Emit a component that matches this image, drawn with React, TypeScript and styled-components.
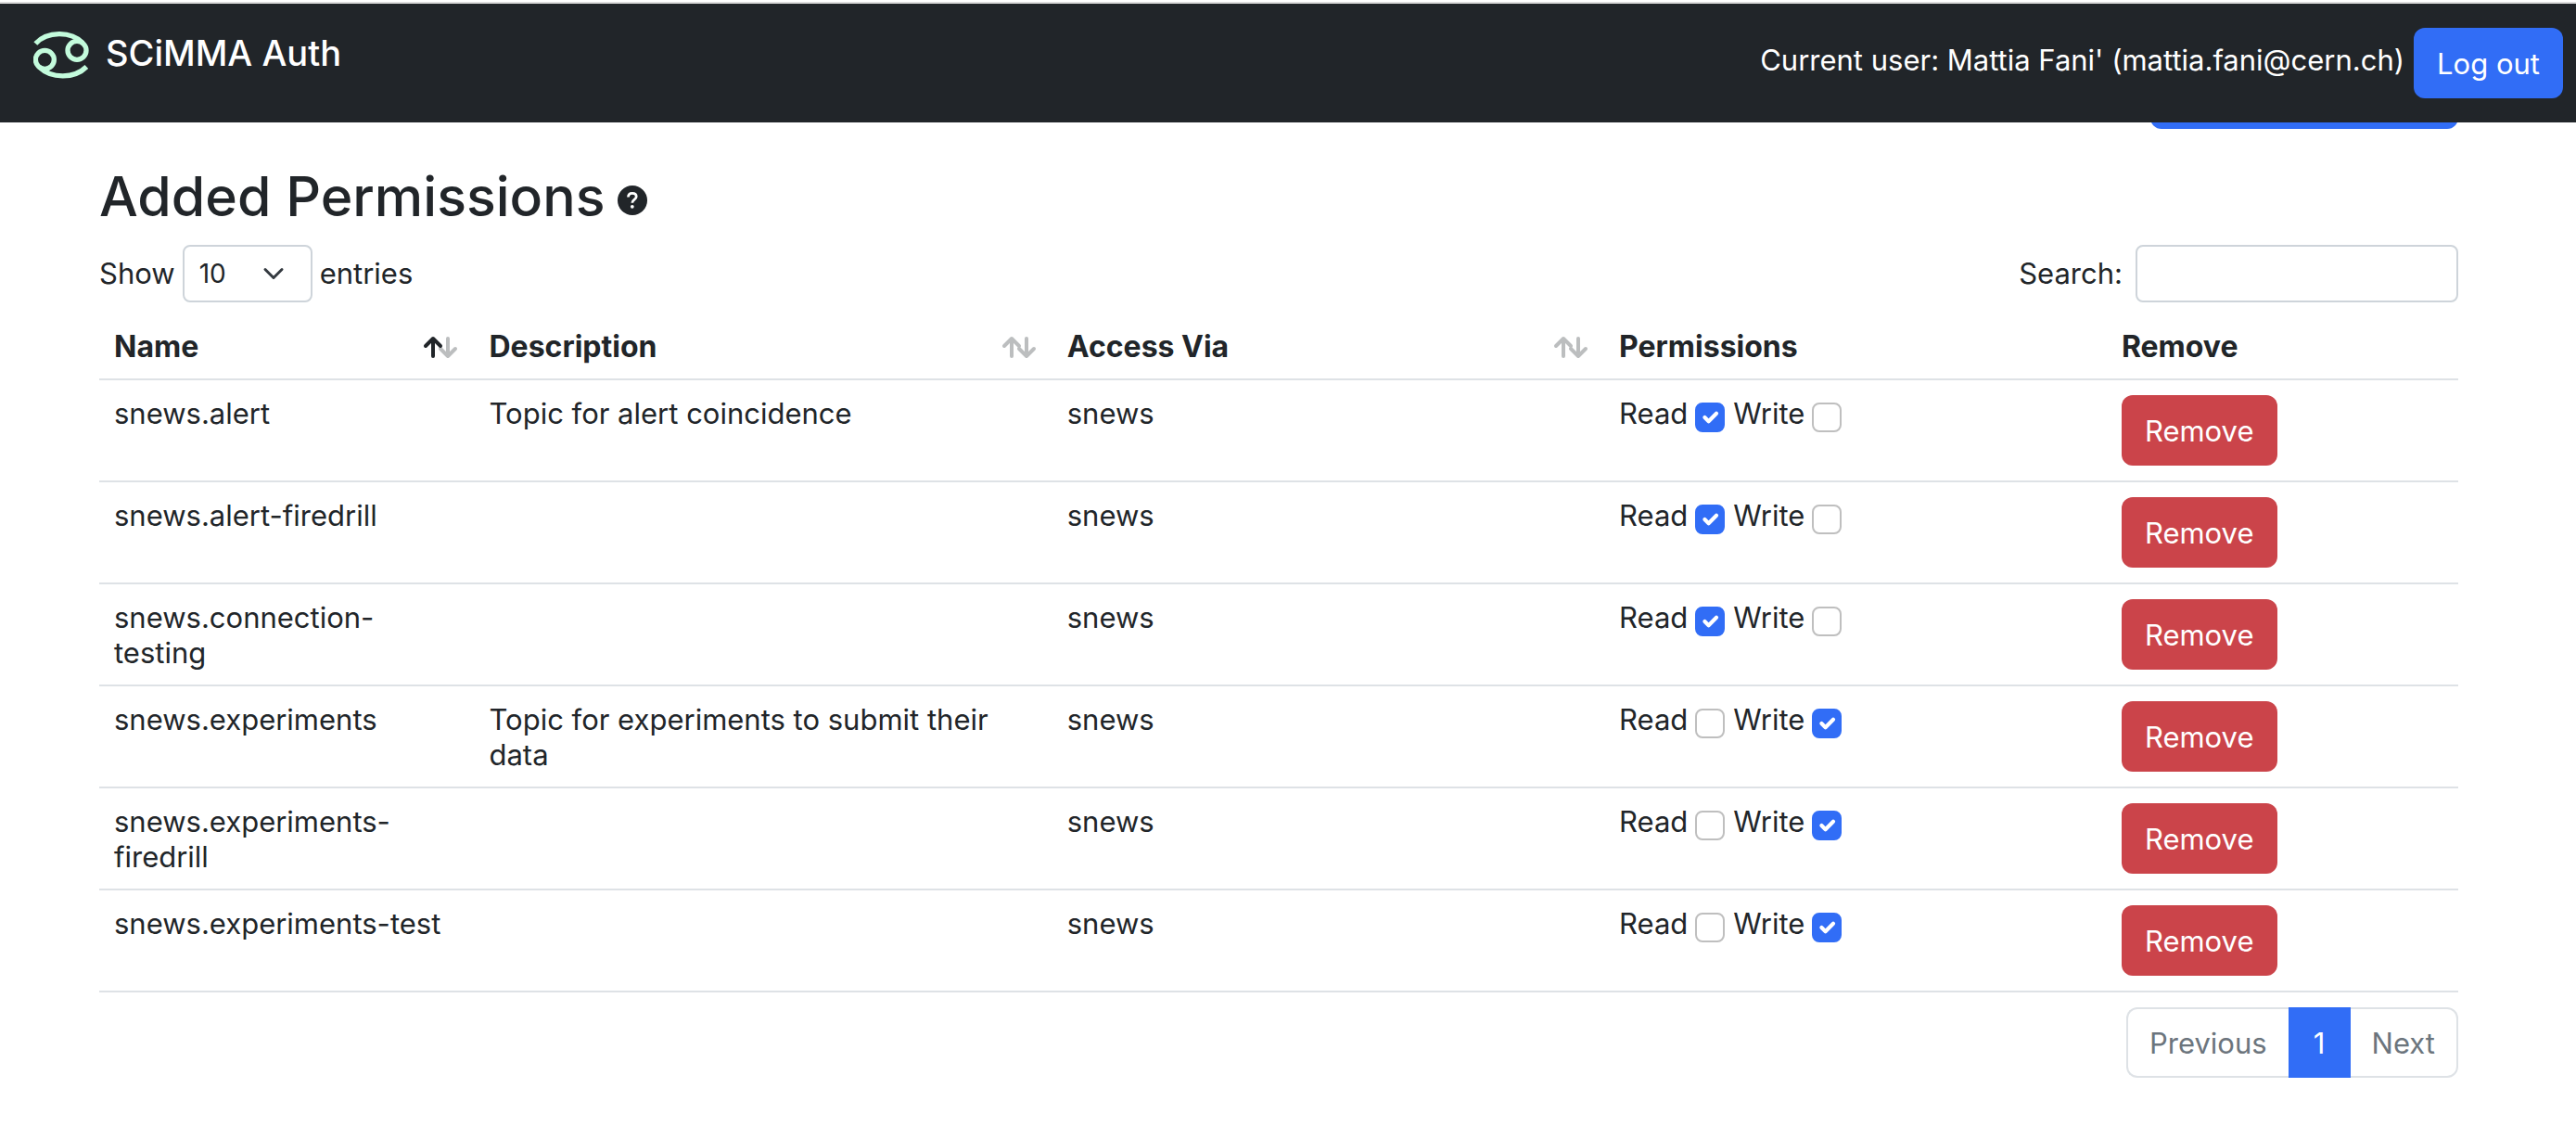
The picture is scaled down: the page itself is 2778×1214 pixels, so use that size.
import React, { useState } from "react";
import styled, { createGlobalStyle } from "styled-components";

const GlobalStyle = createGlobalStyle`
  *, *::before, *::after { box-sizing: border-box; }
  body {
    margin: 0;
    background: #fff;
    color: #212529;
    font-family: Inter, "Liberation Sans", sans-serif;
    font-size: 31px;
    line-height: 38px;
  }
`;

const Navbar = styled.header`
  position: relative;
  z-index: 1;
  display: flex;
  align-items: flex-start;
  justify-content: space-between;
  margin-top: 2px;
  height: 130px;
  padding: 26px 14px 0 36px;
  border-top: 2px solid #dcdcdc;
  background: #212529;
  color: #fff;
`;

const Brand = styled.a`
  display: flex;
  align-items: flex-start;
  gap: 18px;
  color: #fff;
  font-size: 38px;
  font-weight: 500;
  line-height: 54px;
  text-decoration: none;
`;

const Logo = styled.svg`
  width: 60px;
  height: 52px;
  margin-top: 4px;
`;

const Account = styled.div`
  display: flex;
  align-items: flex-start;
  gap: 10px;
`;

const UserName = styled.span`
  padding: 16px 0;
`;

const Button = styled.button<{ $color: string }>`
  display: block;
  height: 76px;
  padding: 2px 25px 0;
  border: 0;
  border-radius: 12px;
  background: ${(p) => p.$color};
  color: #fff;
  font: inherit;
`;

const ActionButton = styled(Button)`
  min-width: 332px;
`;

const ActionRow = styled.div`
  display: flex;
  justify-content: flex-end;
  margin-top: -69px;
`;

const Main = styled.main`
  padding: 0 127px 0 107px;
`;

const Heading = styled.h1`
  display: flex;
  align-items: center;
  gap: 14px;
  margin: 34px 0 14px;
  font-size: 59px;
  font-weight: 500;
  line-height: 77px;
`;

const HelpIcon = styled.svg`
  width: 32px;
  height: 32px;
  margin-top: 8px;
`;

const Controls = styled.div`
  display: flex;
  justify-content: space-between;
  margin-bottom: 12px;
`;

const Field = styled.label<{ $gap: number }>`
  display: flex;
  align-items: center;
  gap: ${(p) => p.$gap}px;
`;

const chevron =
  "url(\"data:image/svg+xml,%3Csvg xmlns='http://www.w3.org/2000/svg' viewBox='0 0 16 16'%3E%3Cpath fill='none' stroke='%23343a40' stroke-linecap='round' stroke-linejoin='round' stroke-width='2' d='m2 5 6 6 6-6'/%3E%3C/svg%3E\")";
const tick =
  "url(\"data:image/svg+xml,%3Csvg xmlns='http://www.w3.org/2000/svg' viewBox='0 0 20 20'%3E%3Cpath fill='none' stroke='%23fff' stroke-linecap='round' stroke-linejoin='round' stroke-width='3' d='m6 10 3 3 6-6'/%3E%3C/svg%3E\")";

const Select = styled.select`
  appearance: none;
  width: 140px;
  height: 62px;
  padding: 0 16px;
  border: 2px solid #ced4da;
  border-radius: 8px;
  background: #fff ${chevron} no-repeat right 28px center / 24px 24px;
  color: inherit;
  font: inherit;
  font-size: 28px;
`;

const SearchInput = styled.input`
  width: 348px;
  height: 62px;
  padding: 0 16px;
  border: 2px solid #ced4da;
  border-radius: 8px;
  font: inherit;
  font-size: 28px;
`;

const Table = styled.table`
  width: 100%;
  table-layout: fixed;
  border-collapse: separate;
  border-spacing: 0;
`;

const HeadCell = styled.th<{ $width: string }>`
  width: ${(p) => p.$width};
  padding: 17px 16px 15px;
  border-bottom: 2px solid #dee2e6;
  font-size: 32px;
  font-weight: 700;
  text-align: left;
`;

const HeadContent = styled.div`
  display: flex;
  align-items: center;
  justify-content: space-between;
`;

const SortIcon = styled.svg`
  width: 40px;
  height: 26px;
`;

const Cell = styled.td<{ $top?: number }>`
  height: 110px;
  padding: ${(p) => p.$top ?? 17}px 16px 0;
  border-bottom: 2px solid #dee2e6;
  vertical-align: top;
`;

const Toggles = styled.div`
  display: flex;
  gap: 9px;
`;

const Toggle = styled.label`
  display: flex;
  align-items: flex-start;
  gap: 8px;
`;

const Checkbox = styled.input`
  appearance: none;
  width: 32px;
  height: 32px;
  margin: 7px 0 0;
  border: 2px solid #bfbfbf;
  border-radius: 8px;
  background: #fff;
  &:checked {
    border-color: #316df6;
    background: #316df6 ${tick} no-repeat center / 28px 28px;
  }
`;

const Pagination = styled.nav`
  display: flex;
  justify-content: flex-end;
  margin-top: 16px;
`;

const PageButton = styled.button<{ $edge?: "start" | "end" }>`
  min-width: 67px;
  height: 76px;
  padding: 2px 23px 0;
  border: 2px solid #dee2e6;
  border-left-width: ${(p) => (p.$edge === "end" ? 0 : 2)}px;
  border-right-width: ${(p) => (p.$edge === "start" ? 0 : 2)}px;
  border-radius: ${(p) => (p.$edge === "start" ? "12px 0 0 12px" : p.$edge === "end" ? "0 12px 12px 0" : "0")};
  background: #fff;
  color: #6c757d;
  font: inherit;
  &[aria-current="page"] {
    border-color: #316df6;
    background: #316df6;
    color: #fff;
  }
`;

const columns = [
  { label: "Name", width: "15.9%", sort: "active" },
  { label: "Description", width: "24.5%", sort: "idle" },
  { label: "Access Via", width: "23.4%", sort: "idle" },
  { label: "Permissions", width: "21.3%" },
  { label: "Remove", width: "14.9%" },
];

const initialRows = [
  { name: "snews.alert", description: "Topic for alert coincidence", read: true, write: false },
  { name: "snews.alert-firedrill", description: "", read: true, write: false },
  { name: "snews.connection-testing", description: "", read: true, write: false },
  { name: "snews.experiments", description: "Topic for experiments to submit their data", read: false, write: true },
  { name: "snews.experiments-firedrill", description: "", read: false, write: true },
  { name: "snews.experiments-test", description: "", read: false, write: true },
];

function SortArrows({ active }: { active: boolean }) {
  return (
    <SortIcon viewBox="0 0 40 26" fill="none" strokeWidth="4" strokeLinecap="round" strokeLinejoin="round" aria-hidden="true">
      <path d="M28 4v19M20 15l8 8 8-8" stroke="#bcbebf" />
      <path d="M12 23V4M4 12l8-8 8 8" stroke={active ? "#212529" : "#bcbebf"} />
    </SortIcon>
  );
}

function Help() {
  return (
    <HelpIcon viewBox="0 0 32 32" aria-hidden="true">
      <circle cx="16" cy="16" r="16" fill="#212529" />
      <path d="M11.500 12.500c0-2.800 1.800-4.200 4.300-4.200s4.400 1.300 4.400 3.700c0 3.200-4.400 3.100-4.400 6.800" fill="none" stroke="#fff" strokeWidth="2.800" />
      <circle cx="15.800" cy="22.800" r="1.900" fill="#fff" />
    </HelpIcon>
  );
}

export default function App() {
  const [rows, setRows] = useState(initialRows);
  const toggle = (name: string, key: "read" | "write") =>
    setRows(rows.map((r) => (r.name === name ? { ...r, [key]: !r[key] } : r)));

  return (
    <>
      <GlobalStyle />
      <Navbar>
        <Brand href="#">
          <Logo viewBox="18 18 180 156" fill="none" stroke="#c3fbdc" strokeWidth="16" aria-hidden="true">
            <circle cx="55" cy="109" r="30" />
            <circle cx="159" cy="79" r="30" />
            <path d="M25 57C63 16 139 16 178 55" />
            <path d="M190 132C151 171 76 171 37 133" />
          </Logo>
          SCiMMA Auth
        </Brand>
        <Account>
          <UserName>Current user: Mattia Fani' (mattia.fani@cern.ch)</UserName>
          <Button type="button" $color="#316df6">Log out</Button>
        </Account>
      </Navbar>
      <Main>
        <ActionRow>
          <ActionButton type="button" $color="#316df6" aria-label="Create credential" />
        </ActionRow>
        <Heading>
          Added Permissions
          <Help />
        </Heading>
        <Controls>
          <Field $gap={8}>
            Show
            <Select defaultValue="10">
              <option>10</option>
              <option>25</option>
              <option>50</option>
              <option>100</option>
            </Select>
            entries
          </Field>
          <Field $gap={14}>
            Search:
            <SearchInput type="search" />
          </Field>
        </Controls>
        <Table>
          <thead>
            <tr>
              {columns.map((c) => (
                <HeadCell key={c.label} $width={c.width} scope="col">
                  <HeadContent>
                    {c.label}
                    {c.sort && <SortArrows active={c.sort === "active"} />}
                  </HeadContent>
                </HeadCell>
              ))}
            </tr>
          </thead>
          <tbody>
            {rows.map((r) => (
              <tr key={r.name}>
                <Cell>{r.name}</Cell>
                <Cell>{r.description}</Cell>
                <Cell>snews</Cell>
                <Cell>
                  <Toggles>
                    <Toggle>
                      Read
                      <Checkbox type="checkbox" checked={r.read} onChange={() => toggle(r.name, "read")} />
                    </Toggle>
                    <Toggle>
                      Write
                      <Checkbox type="checkbox" checked={r.write} onChange={() => toggle(r.name, "write")} />
                    </Toggle>
                  </Toggles>
                </Cell>
                <Cell $top={16}>
                  <Button type="button" $color="#cb444a">Remove</Button>
                </Cell>
              </tr>
            ))}
          </tbody>
        </Table>
        <Pagination aria-label="Permissions pages">
          <PageButton type="button" $edge="start">Previous</PageButton>
          <PageButton type="button" aria-current="page">1</PageButton>
          <PageButton type="button" $edge="end">Next</PageButton>
        </Pagination>
      </Main>
    </>
  );
}
